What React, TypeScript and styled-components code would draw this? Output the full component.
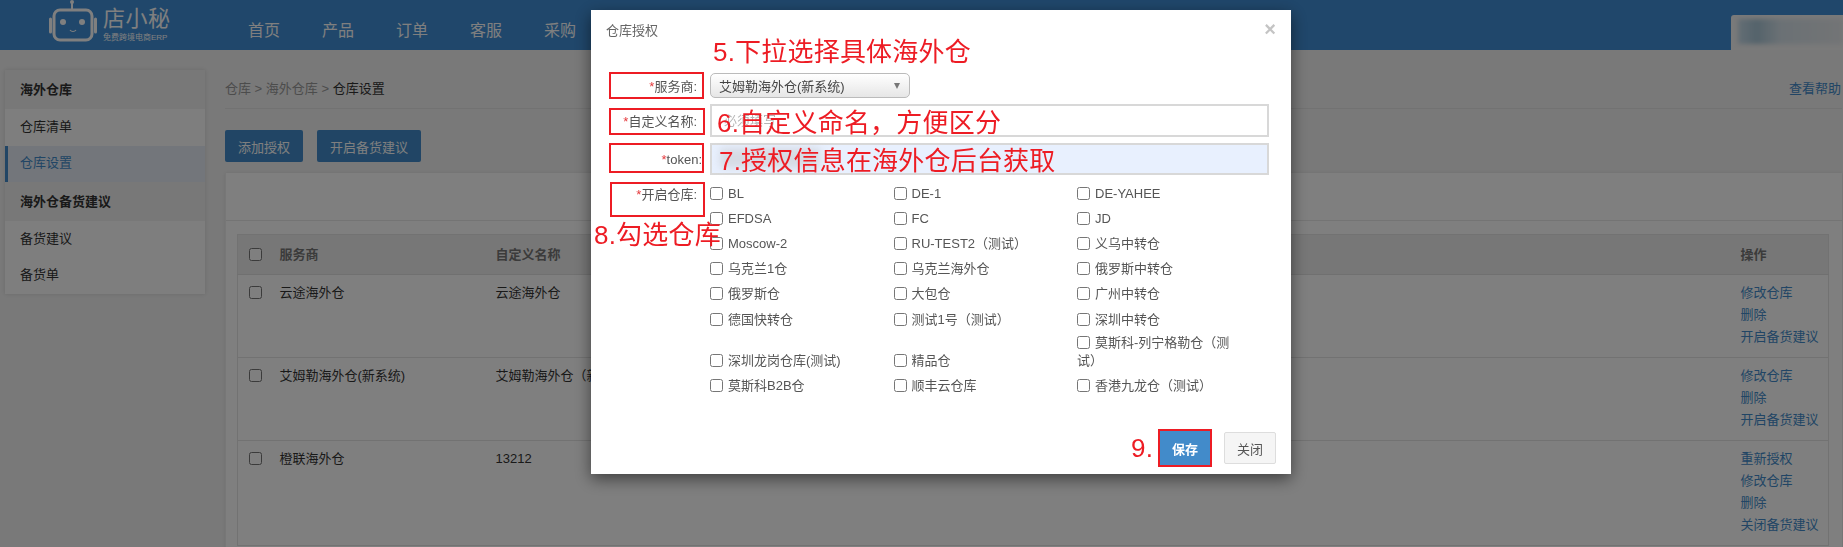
import React from "react";
import styled, { createGlobalStyle } from "styled-components";

const FONT = `"Liberation Sans", "Noto Sans CJK SC", sans-serif`;
const RED = "#ed1c24";

const GlobalStyle = createGlobalStyle`
  html, body {
    margin: 0;
    padding: 0;
    height: 100%;
    overflow: hidden;
    background: #f2f2f2;
    font-family: ${FONT};
    font-size: 13px;
    color: #333;
  }
  * { box-sizing: border-box; }
`;

const Page = styled.div`
  width: 1843px;
  height: 547px;
  overflow: hidden;
`;

const Header = styled.header`
  height: 50px;
  background: #408ed6;
  display: flex;
  align-items: stretch;
  color: #fff;
`;

const Brand = styled.div`
  width: 248px;
  padding-left: 49px;
  display: flex;
  gap: 6px;
`;

const BrandText = styled.div`
  display: flex;
  flex-direction: column;
  padding-top: 6px;
`;

const BrandName = styled.span`
  font-size: 22px;
  line-height: 26px;
  letter-spacing: 0.5px;
  white-space: nowrap;
`;

const BrandSub = styled.span`
  font-size: 8px;
  line-height: 11px;
  white-space: nowrap;
`;

const Nav = styled.nav`
  display: flex;
  gap: 42px;
  flex: 1;
  align-items: center;
  padding-top: 8px;
  font-size: 16px;
`;

const UserBox = styled.div`
  width: 112px;
  margin-top: 15px;
  padding: 4px 0 6px 7px;
  background: #f4f4f4;
  border-top-left-radius: 3px;
  overflow: hidden;
`;

const UserBlur = styled.div`
  height: 100%;
  background: linear-gradient(90deg, #c8dcea 0%, #a9c6d6 18%, #d6e2ea 40%, #e6e9ec 100%);
  filter: blur(2px);
`;

const Content = styled.div`
  display: flex;
  align-items: flex-start;
  padding: 20px 1px 0 5px;
`;

const Sidebar = styled.aside`
  width: 200px;
  flex: none;
  background: #fdfdfd;
  box-shadow: 0 0 4px rgba(0, 0, 0, 0.12);
`;

const SideTitle = styled.div`
  height: 39px;
  padding: 0 0 3px 15px;
  display: flex;
  align-items: center;
  font-weight: bold;
  background: #f0f0f0;
  color: #333;
`;

const SideItem = styled.div<{ $active?: boolean }>`
  height: 36.5px;
  padding: 0 0 4px ${(p) => (p.$active ? 12 : 15)}px;
  display: flex;
  align-items: center;
  color: ${(p) => (p.$active ? "#428bca" : "#333")};
  background: ${(p) => (p.$active ? "#e6edf6" : "transparent")};
  border-left: ${(p) => (p.$active ? "3px solid #428bca" : "none")};
`;

const Main = styled.main`
  flex: 1;
  margin-left: 20px;
`;

const Crumbs = styled.div`
  height: 39px;
  display: flex;
  justify-content: space-between;
  align-items: center;
  padding-bottom: 3px;
  border-bottom: 1px solid #e4e4e4;
  color: #999;
`;

const CrumbNow = styled.span`
  color: #333;
`;

const HelpLink = styled.a`
  color: #428bca;
  margin-right: 1px;
`;

const Actions = styled.div`
  display: flex;
  gap: 14px;
  margin-top: 21px;
`;

const Btn = styled.button`
  height: 32px;
  padding: 0 13px;
  border: none;
  border-radius: 2px;
  background: #428bca;
  color: #fff;
  font: 13px ${FONT};
`;

const Card = styled.section`
  margin-top: 11px;
  background: #fff;
  border-left: 1px solid #eee;
  box-shadow: 0 0 3px rgba(0, 0, 0, 0.08);
  padding-bottom: 20px;
`;

const CardTop = styled.div`
  height: 48px;
  border-bottom: 1px solid #e8e8e8;
`;

const Table = styled.table`
  width: 1592px;
  margin: 13px 0 0 11px;
  table-layout: fixed;
  border-collapse: collapse;
  border: 1px solid #e4e4e4;
`;

const Th = styled.th`
  height: 40px;
  padding: 0 10px 2px;
  text-align: left;
  font-weight: bold;
  color: #777;
  background: #eeeeee;
  border-bottom: 1px solid #e0e0e0;
`;

const Td = styled.td`
  padding: 7px 10px 9px;
  line-height: 22px;
  vertical-align: top;
  color: #333;
  border-bottom: 1px solid #e4e4e4;
  white-space: nowrap;
  overflow: hidden;
`;

const LinkLine = styled.a`
  display: block;
  color: #428bca;
`;

const RowCheck = styled.input.attrs({ type: "checkbox" })`
  display: block;
  margin: 4px 0 0 1px;
  width: 13px;
  height: 13px;
`;

const HeadCheck = styled(RowCheck)`
  margin-top: 2px;
`;

const Overlay = styled.div`
  position: fixed;
  inset: 0;
  background: rgba(0, 0, 0, 0.5);
`;

const Modal = styled.div`
  position: fixed;
  left: 591px;
  top: 10px;
  width: 700px;
  height: 464px;
  background: #fff;
  box-shadow: 0 5px 15px rgba(0, 0, 0, 0.5);
  display: flex;
  flex-direction: column;
  color: #666;
`;

const ModalHead = styled.div`
  height: 63px;
  padding: 12px 15px 0 15px;
  display: flex;
  justify-content: space-between;
  line-height: 18px;
  color: #666;
`;

const CloseX = styled.span`
  font: bold 20px/14px ${FONT};
  color: #c4c4c4;
`;

const FormRow = styled.div<{ $h: number }>`
  display: flex;
  height: ${(p) => p.$h}px;
  margin-bottom: 6px;
  padding-right: 22px;
`;

const Label = styled.label<{ $over?: number }>`
  width: 106px;
  margin-right: 13px;
  position: relative;
  left: ${(p) => p.$over ?? 0}px;
  text-align: right;
  align-self: center;
  color: #555;
  white-space: nowrap;
`;

const TopLabel = styled(Label)`
  align-self: flex-start;
  padding-top: 3px;
`;

const Star = styled.span`
  color: #e4393c;
`;

const SelectBox = styled.div`
  position: relative;
  width: 200px;
  height: 25px;
  padding-left: 8px;
  display: flex;
  align-items: center;
  border: 1px solid #bbb;
  border-radius: 5px;
  background: linear-gradient(#ffffff, #e6e6e6);
  color: #444;
  &::after {
    content: "";
    position: absolute;
    right: 9px;
    top: 9px;
    border-left: 3.5px solid transparent;
    border-right: 3.5px solid transparent;
    border-top: 6px solid #777;
  }
`;

const TextInput = styled.input<{ $filled?: boolean }>`
  flex: 1;
  min-width: 0;
  padding: 0 12px;
  border: 2px solid #d8d8d8;
  background: ${(p) => (p.$filled ? "#e8f0fe" : "#fff")};
  font: 13px ${FONT};
  &::placeholder { color: #b5b5b5; }
`;

const Checks = styled.div`
  display: grid;
  grid-template-columns: repeat(3, 183.5px);
  grid-template-rows: repeat(6, 25.2px) 41px 25px;
  align-items: end;
  width: 551px;
`;

const CheckCell = styled.label`
  padding: 3.5px 20px 3.5px 0;
  line-height: 18px;
  color: #555;
`;

const CheckBox = styled.input.attrs({ type: "checkbox" })`
  width: 13px;
  height: 13px;
  margin: 0 5px 0 0;
  vertical-align: -2px;
`;

const Footer = styled.div`
  margin-top: auto;
  padding: 0 15px 9px 0;
  display: flex;
  justify-content: flex-end;
  align-items: center;
  gap: 14px;
`;

const SaveBtn = styled.button`
  width: 50px;
  height: 34px;
  border: none;
  background: #428bca;
  color: #fff;
  font: bold 13px ${FONT};
  outline: 2px solid ${RED};
  outline-offset: 0;
`;

const CloseBtn = styled.button`
  width: 52px;
  height: 32px;
  border: 1px solid #ddd;
  border-radius: 2px;
  background: #f5f5f5;
  color: #555;
  font: 13px ${FONT};
`;

/* red notes someone drew on top of the screenshot */
const Note = styled.span<{ $x: number; $y: number }>`
  position: absolute;
  left: ${(p) => p.$x}px;
  top: ${(p) => p.$y}px;
  font: 26px/34px ${FONT};
  letter-spacing: 0.2px;
  color: ${RED};
  white-space: nowrap;
`;

const RedBox = styled.div<{ $x: number; $y: number; $w: number; $h: number }>`
  position: absolute;
  left: ${(p) => p.$x}px;
  top: ${(p) => p.$y}px;
  width: ${(p) => p.$w}px;
  height: ${(p) => p.$h}px;
  border: 2px solid ${RED};
`;

const TokenSmudge = styled.div`
  position: absolute;
  left: 129px;
  top: 138px;
  width: 100px;
  height: 20px;
  background: #c9ccd2;
  opacity: 0.6;
  filter: blur(4px);
`;

function Logo() {
  return (
    <svg width="48" height="42" viewBox="0 0 48 42" fill="none" style={{ flex: "none" }}>
      <path d="M23 9V3" stroke="#fff" strokeWidth="2" />
      <circle cx="23" cy="2" r="2" fill="#fff" />
      <rect x="5" y="10" width="38" height="30" rx="6" stroke="#fff" strokeWidth="3" />
      <path d="M1.5 19v13M46.5 19v13" stroke="#fff" strokeWidth="3" strokeLinecap="round" />
      <circle cx="14" cy="22" r="3" fill="#fff" />
      <circle cx="33" cy="22" r="3" fill="#fff" />
      <path d="M21 30c1.5 2 4.5 2 6 0" stroke="#fff" strokeWidth="1.2" />
    </svg>
  );
}

const warehouses = [
  "BL", "DE-1", "DE-YAHEE",
  "EFDSA", "FC", "JD",
  "Moscow-2", "RU-TEST2（测试）", "义乌中转仓",
  "乌克兰1仓", "乌克兰海外仓", "俄罗斯中转仓",
  "俄罗斯仓", "大包仓", "广州中转仓",
  "德国快转仓", "测试1号（测试）", "深圳中转仓",
  "深圳龙岗仓库(测试)", "精品仓", "莫斯科-列宁格勒仓（测试）",
  "莫斯科B2B仓", "顺丰云仓库", "香港九龙仓（测试）",
];

const rows = [
  { name: "云途海外仓", alias: "云途海外仓", links: ["修改仓库", "删除", "开启备货建议"] },
  { name: "艾姆勒海外仓(新系统)", alias: "艾姆勒海外仓（新系统）", links: ["修改仓库", "删除", "开启备货建议"] },
  { name: "橙联海外仓", alias: "13212", links: ["重新授权", "修改仓库", "删除", "关闭备货建议"] },
];

export default function App() {
  return (
    <Page>
      <GlobalStyle />
      <Header>
        <Brand>
          <Logo />
          <BrandText>
            <BrandName>店小秘</BrandName>
            <BrandSub>免费跨境电商ERP</BrandSub>
          </BrandText>
        </Brand>
        <Nav>
          {["首页", "产品", "订单", "客服", "采购"].map((n) => (
            <span key={n}>{n}</span>
          ))}
        </Nav>
        <UserBox>
          <UserBlur />
        </UserBox>
      </Header>

      <Content>
        <Sidebar>
          <SideTitle>海外仓库</SideTitle>
          <SideItem>仓库清单</SideItem>
          <SideItem $active>仓库设置</SideItem>
          <SideTitle>海外仓备货建议</SideTitle>
          <SideItem>备货建议</SideItem>
          <SideItem>备货单</SideItem>
        </Sidebar>

        <Main>
          <Crumbs>
            <span>
              仓库 &gt; 海外仓库 &gt; <CrumbNow>仓库设置</CrumbNow>
            </span>
            <HelpLink>查看帮助</HelpLink>
          </Crumbs>
          <Actions>
            <Btn>添加授权</Btn>
            <Btn>开启备货建议</Btn>
          </Actions>
          <Card>
            <CardTop />
            <Table>
              <colgroup>
                <col style={{ width: 32 }} />
                <col style={{ width: 216 }} />
                <col />
                <col style={{ width: 98 }} />
              </colgroup>
              <thead>
                <tr>
                  <Th>
                    <HeadCheck />
                  </Th>
                  <Th>服务商</Th>
                  <Th>自定义名称</Th>
                  <Th>操作</Th>
                </tr>
              </thead>
              <tbody>
                {rows.map((r) => (
                  <tr key={r.name}>
                    <Td>
                      <RowCheck />
                    </Td>
                    <Td>{r.name}</Td>
                    <Td>{r.alias}</Td>
                    <Td>
                      {r.links.map((l) => (
                        <LinkLine key={l}>{l}</LinkLine>
                      ))}
                    </Td>
                  </tr>
                ))}
              </tbody>
            </Table>
          </Card>
        </Main>
      </Content>

      <Overlay />

      <Modal>
        <ModalHead>
          <span>仓库授权</span>
          <CloseX>×</CloseX>
        </ModalHead>
        <FormRow $h={25}>
          <Label>
            <Star>*</Star>服务商:
          </Label>
          <SelectBox>艾姆勒海外仓(新系统)</SelectBox>
        </FormRow>
        <FormRow $h={33}>
          <Label>
            <Star>*</Star>自定义名称:
          </Label>
          <TextInput placeholder="必须填写" />
        </FormRow>
        <FormRow $h={32}>
          <Label $over={5}>
            <Star>*</Star>token:
          </Label>
          <TextInput $filled />
        </FormRow>
        <FormRow $h={216}>
          <TopLabel>
            <Star>*</Star>开启仓库:
          </TopLabel>
          <Checks>
            {warehouses.map((w) => (
              <CheckCell key={w}>
                <CheckBox />
                {w}
              </CheckCell>
            ))}
          </Checks>
        </FormRow>
        <Footer>
          <SaveBtn>保存</SaveBtn>
          <CloseBtn>关闭</CloseBtn>
        </Footer>

        <TokenSmudge />
        <RedBox $x={18} $y={62} $w={95} $h={27} />
        <RedBox $x={18} $y={98} $w={96} $h={27} />
        <RedBox $x={18} $y={133} $w={95} $h={30} />
        <RedBox $x={19} $y={172} $w={95} $h={35} />
        <Note $x={122} $y={25}>5.下拉选择具体海外仓</Note>
        <Note $x={126} $y={96}>6.自定义命名，方便区分</Note>
        <Note $x={128} $y={134}>7.授权信息在海外仓后台获取</Note>
        <Note $x={3} $y={208}>8.勾选仓库</Note>
        <Note $x={540} $y={421}>9.</Note>
      </Modal>
    </Page>
  );
}
